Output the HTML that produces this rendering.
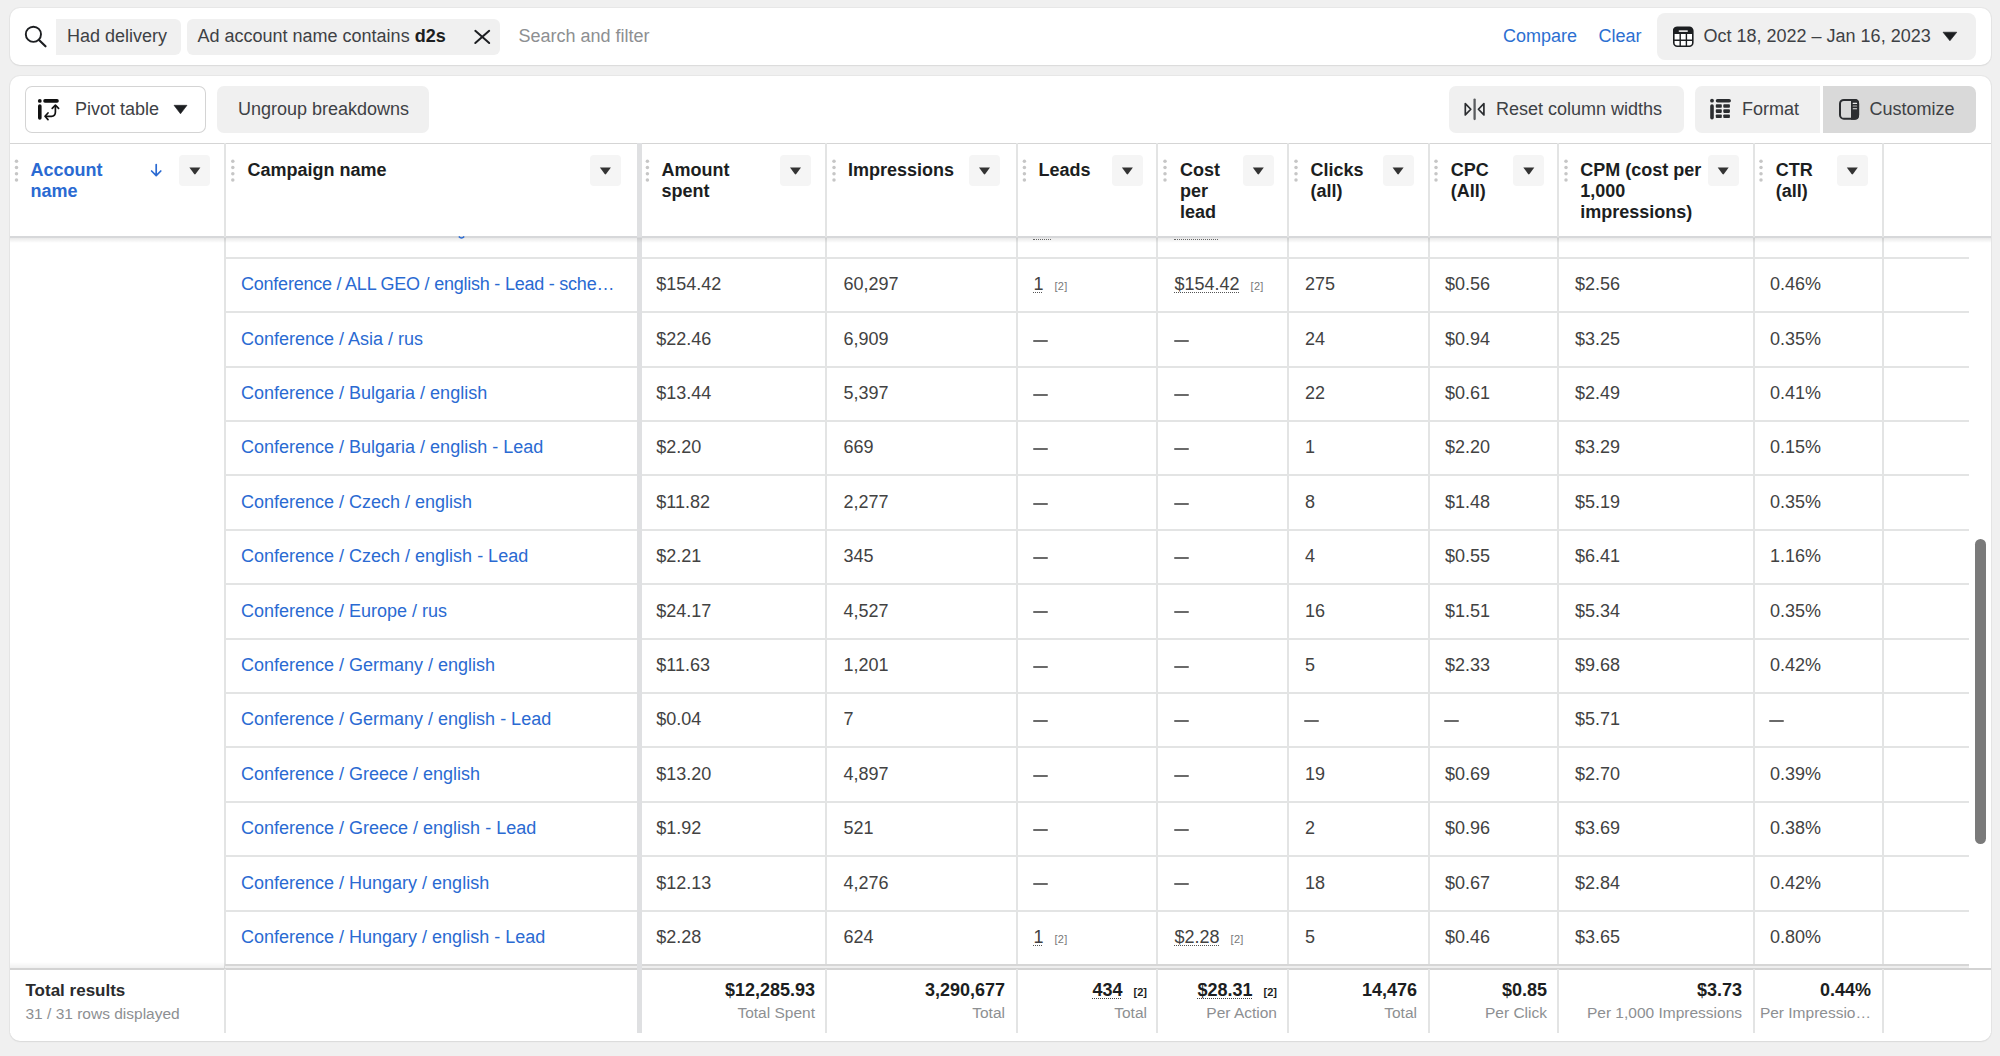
<!DOCTYPE html>
<html><head><meta charset="utf-8"><style>
html,body{margin:0;padding:0;}
body{width:2000px;height:1056px;overflow:hidden;background:#f0f0f0;position:relative;font-family:"Liberation Sans", sans-serif;}
.t{position:absolute;white-space:nowrap;}
.r{position:absolute;}
svg{position:absolute;overflow:visible;}
</style></head><body>

<div class="r" style="left:10px;top:8px;width:1981px;height:57px;background:#fff;border-radius:10px;box-shadow:0 0 0 1px rgba(0,0,0,0.035),0 1px 2px rgba(0,0,0,0.06);"></div>
<svg style="left:0;top:0" width="60" height="60"><circle cx="33.4" cy="34.3" r="7.6" fill="none" stroke="#1c1e21" stroke-width="1.9"/><line x1="39" y1="40" x2="45.5" y2="46.3" stroke="#1c1e21" stroke-width="2.2" stroke-linecap="round"/></svg>
<div class="r" style="left:56px;top:19px;width:125px;height:36px;background:#f0f0f0;border-radius:0 6px 6px 0;"></div>
<div class="t" style="left:67.00px;top:25.76px;font-size:18px;line-height:21px;font-weight:400;color:#3e4145;">Had delivery</div>
<div class="r" style="left:187px;top:19px;width:313px;height:36px;background:#f0f0f0;border-radius:6px;"></div>
<div class="t" style="left:197.50px;top:25.76px;font-size:18px;line-height:21px;font-weight:400;color:#3e4145;">Ad account name contains <b style="color:#1c1e21">d2s</b></div>
<svg style="left:0;top:0" width="500" height="60"><path d="M475.3 30.8 L489.2 43 M489.2 30.8 L475.3 43" stroke="#1c1e21" stroke-width="2" stroke-linecap="round"/></svg>
<div class="t" style="left:518.50px;top:25.76px;font-size:18px;line-height:21px;font-weight:400;color:#8d8f92;">Search and filter</div>
<div class="t" style="left:1503.00px;top:25.76px;font-size:18px;line-height:21px;font-weight:400;color:#2c6fd1;">Compare</div>
<div class="t" style="left:1598.50px;top:25.76px;font-size:18px;line-height:21px;font-weight:400;color:#2c6fd1;">Clear</div>
<div class="r" style="left:1657px;top:13px;width:319px;height:47px;background:#f0f0f0;border-radius:8px;"></div>
<svg style="left:0;top:0" width="1700" height="60">
<rect x="1673.8" y="27.3" width="19" height="19" rx="3.5" fill="#fff" stroke="#1c1e21" stroke-width="1.6"/>
<path d="M1673 30.5 a3.5 3.5 0 0 1 3.5 -3.5 h12.5 a3.5 3.5 0 0 1 3.5 3.5 v3.6 h-19.5z" fill="#1c1e21"/>
<rect x="1678.6" y="30.2" width="9.4" height="1.8" rx="0.9" fill="#e0e0e0"/>
<path d="M1680.2 34 v12.6 M1686.4 34 v12.6 M1673.5 40.2 h19.5" stroke="#1c1e21" stroke-width="1.4"/>
</svg>
<div class="t" style="left:1703.50px;top:25.76px;font-size:18px;line-height:21px;font-weight:400;color:#3e4145;">Oct 18, 2022 – Jan 16, 2023</div>
<svg style="left:0;top:0" width="1970" height="60"><path d="M1943 32.2 L1956.8 32.2 L1949.9 40.8 Z" fill="#1c1e21" stroke="#1c1e21" stroke-width="0.6" stroke-linejoin="round"/></svg>
<div class="r" style="left:10px;top:76px;width:1981px;height:965px;background:#fff;border-radius:10px;box-shadow:0 0 0 1px rgba(0,0,0,0.035),0 1px 2px rgba(0,0,0,0.06);"></div>
<div class="r" style="left:25px;top:86px;width:181px;height:47px;background:#fff;border-radius:7px;box-shadow:inset 0 0 0 1px #d4d4d4;"></div>
<svg style="left:0;top:0" width="210" height="140">
<circle cx="39.8" cy="100.9" r="1.9" fill="#111"/>
<line x1="45" y1="100.9" x2="57" y2="100.9" stroke="#111" stroke-width="3.6" stroke-linecap="round"/>
<line x1="39.8" y1="106" x2="39.8" y2="118" stroke="#111" stroke-width="3.6" stroke-linecap="round"/>
<path d="M46 116.3 H51.5 Q55.4 116.3 55.4 112 V106" fill="none" stroke="#111" stroke-width="1.7"/>
<path d="M48 113 L45 116.3 L48 119.6" fill="none" stroke="#111" stroke-width="1.7" stroke-linecap="round" stroke-linejoin="round"/>
<path d="M52.2 108.4 L55.4 105.2 L58.6 108.4" fill="none" stroke="#111" stroke-width="1.7" stroke-linecap="round" stroke-linejoin="round"/>
<path d="M174 105.3 L187 105.3 L180.5 113.8 Z" fill="#1c1e21" stroke="#1c1e21" stroke-width="0.6" stroke-linejoin="round"/>
</svg>
<div class="t" style="left:75.00px;top:99.26px;font-size:18px;line-height:21px;font-weight:400;color:#3e4145;">Pivot table</div>
<div class="r" style="left:217px;top:86px;width:212px;height:47px;background:#f0f0f0;border-radius:7px;"></div>
<div class="t" style="left:238.00px;top:99.26px;font-size:18px;line-height:21px;font-weight:400;color:#3e4145;">Ungroup breakdowns</div>
<div class="r" style="left:1449px;top:86px;width:235px;height:47px;background:#f0f0f0;border-radius:7px;"></div>
<svg style="left:0;top:0" width="1700" height="140">
<path d="M1465.3 103.6 V114.9 L1470.8 109.25 Z" fill="none" stroke="#2b2d30" stroke-width="1.7" stroke-linejoin="round"/>
<path d="M1483.9 103.6 V114.9 L1478.4 109.25 Z" fill="none" stroke="#2b2d30" stroke-width="1.7" stroke-linejoin="round"/>
<line x1="1474.6" y1="99.6" x2="1474.6" y2="119" stroke="#5a5c5f" stroke-width="2.3" stroke-linecap="round"/>
</svg>
<div class="t" style="left:1496.00px;top:99.26px;font-size:18px;line-height:21px;font-weight:400;color:#3e4145;">Reset column widths</div>
<div class="r" style="left:1695px;top:86px;width:125px;height:47px;background:#f0f0f0;border-radius:7px 0 0 7px;"></div>
<svg style="left:0;top:0" width="1740" height="140">
<circle cx="1712" cy="100.7" r="1.9" fill="#2b2d30"/>
<line x1="1717.5" y1="100.7" x2="1729.2" y2="100.7" stroke="#2b2d30" stroke-width="3.5" stroke-linecap="round"/>
<line x1="1712" y1="106" x2="1712" y2="117.8" stroke="#2b2d30" stroke-width="3.6" stroke-linecap="round"/>
<rect x="1715.8" y="104.2" width="6" height="3.6" rx="0.8" fill="#2b2d30"/>
<rect x="1723.3" y="104.2" width="6.6" height="3.6" rx="0.8" fill="#2b2d30"/>
<rect x="1715.8" y="109.3" width="6" height="3.6" rx="0.8" fill="#2b2d30"/>
<rect x="1723.3" y="109.3" width="6.6" height="3.6" rx="0.8" fill="#2b2d30"/>
<rect x="1715.8" y="114.5" width="6" height="3.6" rx="0.8" fill="#2b2d30"/>
<rect x="1723.3" y="114.5" width="6.6" height="3.6" rx="0.8" fill="#2b2d30"/>
</svg>
<div class="t" style="left:1742.00px;top:99.26px;font-size:18px;line-height:21px;font-weight:400;color:#3e4145;">Format</div>
<div class="r" style="left:1823px;top:86px;width:153px;height:47px;background:#d9d9d9;border-radius:0 7px 7px 0;"></div>
<svg style="left:0;top:0" width="1870" height="140">
<rect x="1840" y="99.9" width="18.2" height="18.8" rx="3.8" fill="none" stroke="#2b2d30" stroke-width="2"/>
<path d="M1851 99 H1855 a4 4 0 0 1 4 4 V115.7 a4 4 0 0 1 -4 4 H1851 Z" fill="#2b2d30"/>
<line x1="1853.2" y1="103.4" x2="1856.6" y2="103.4" stroke="#e8e8e8" stroke-width="1.1" stroke-linecap="round"/>
<line x1="1853.2" y1="106" x2="1856.6" y2="106" stroke="#bdbdbd" stroke-width="1.1" stroke-linecap="round"/>
<line x1="1853.2" y1="108.7" x2="1856.6" y2="108.7" stroke="#e8e8e8" stroke-width="1.1" stroke-linecap="round"/>
</svg>
<div class="t" style="left:1869.50px;top:99.26px;font-size:18px;line-height:21px;font-weight:400;color:#3e4145;">Customize</div>
<div class="r" style="left:225px;top:257px;width:1744px;height:2px;background:#e3e4e4;"></div>
<div class="r" style="left:225px;top:311px;width:1744px;height:2px;background:#e3e4e4;"></div>
<div class="r" style="left:225px;top:366px;width:1744px;height:2px;background:#e3e4e4;"></div>
<div class="r" style="left:225px;top:420px;width:1744px;height:2px;background:#e3e4e4;"></div>
<div class="r" style="left:225px;top:474px;width:1744px;height:2px;background:#e3e4e4;"></div>
<div class="r" style="left:225px;top:529px;width:1744px;height:2px;background:#e3e4e4;"></div>
<div class="r" style="left:225px;top:583px;width:1744px;height:2px;background:#e3e4e4;"></div>
<div class="r" style="left:225px;top:638px;width:1744px;height:2px;background:#e3e4e4;"></div>
<div class="r" style="left:225px;top:692px;width:1744px;height:2px;background:#e3e4e4;"></div>
<div class="r" style="left:225px;top:746px;width:1744px;height:2px;background:#e3e4e4;"></div>
<div class="r" style="left:225px;top:801px;width:1744px;height:2px;background:#e3e4e4;"></div>
<div class="r" style="left:225px;top:855px;width:1744px;height:2px;background:#e3e4e4;"></div>
<div class="r" style="left:225px;top:910px;width:1744px;height:2px;background:#e3e4e4;"></div>
<div class="r" style="left:224px;top:143px;width:2px;height:890px;background:#e3e4e4;"></div>
<div class="r" style="left:825px;top:143px;width:2px;height:890px;background:#e3e4e4;"></div>
<div class="r" style="left:1016px;top:143px;width:2px;height:890px;background:#e3e4e4;"></div>
<div class="r" style="left:1156px;top:143px;width:2px;height:890px;background:#e3e4e4;"></div>
<div class="r" style="left:1287px;top:143px;width:2px;height:890px;background:#e3e4e4;"></div>
<div class="r" style="left:1428px;top:143px;width:2px;height:890px;background:#e3e4e4;"></div>
<div class="r" style="left:1557px;top:143px;width:2px;height:890px;background:#e3e4e4;"></div>
<div class="r" style="left:1753px;top:143px;width:2px;height:890px;background:#e3e4e4;"></div>
<div class="r" style="left:1882px;top:143px;width:2px;height:890px;background:#e3e4e4;"></div>
<div class="r" style="left:637px;top:143px;width:5px;height:890px;background:#dfe0e2;"></div>
<div class="t" style="left:241.00px;top:274.26px;font-size:18px;line-height:21px;font-weight:400;color:#2a6ad2;letter-spacing:-0.23px;">Conference / ALL GEO / english - Lead - sche…</div>
<div class="t" style="left:656.30px;top:274.26px;font-size:18px;line-height:21px;font-weight:400;color:#424242;">$154.42</div>
<div class="t" style="left:843.40px;top:274.26px;font-size:18px;line-height:21px;font-weight:400;color:#424242;">60,297</div>
<div class="t" style="left:1033.50px;top:274.26px;font-size:18px;line-height:21px;font-weight:400;color:#424242;"><span style="text-decoration:underline dotted #555;text-decoration-thickness:1.4px;text-underline-offset:1.5px">1</span><span style="font-size:11px;color:#777;margin-left:11px;letter-spacing:0.3px">[2]</span></div>
<div class="t" style="left:1174.50px;top:274.26px;font-size:18px;line-height:21px;font-weight:400;color:#424242;"><span style="text-decoration:underline dotted #555;text-decoration-thickness:1.4px;text-underline-offset:1.5px">$154.42</span><span style="font-size:11px;color:#777;margin-left:11px;letter-spacing:0.3px">[2]</span></div>
<div class="t" style="left:1305.00px;top:274.26px;font-size:18px;line-height:21px;font-weight:400;color:#424242;">275</div>
<div class="t" style="left:1445.00px;top:274.26px;font-size:18px;line-height:21px;font-weight:400;color:#424242;">$0.56</div>
<div class="t" style="left:1575.00px;top:274.26px;font-size:18px;line-height:21px;font-weight:400;color:#424242;">$2.56</div>
<div class="t" style="left:1770.00px;top:274.26px;font-size:18px;line-height:21px;font-weight:400;color:#424242;">0.46%</div>
<div class="t" style="left:241.00px;top:328.66px;font-size:18px;line-height:21px;font-weight:400;color:#2a6ad2;">Conference / Asia / rus</div>
<div class="t" style="left:656.30px;top:328.66px;font-size:18px;line-height:21px;font-weight:400;color:#424242;">$22.46</div>
<div class="t" style="left:843.40px;top:328.66px;font-size:18px;line-height:21px;font-weight:400;color:#424242;">6,909</div>
<div class="r" style="left:1033px;top:340px;width:15px;height:2px;background:#6a6a6a;border-radius:1px;"></div>
<div class="r" style="left:1174px;top:340px;width:15px;height:2px;background:#6a6a6a;border-radius:1px;"></div>
<div class="t" style="left:1305.00px;top:328.66px;font-size:18px;line-height:21px;font-weight:400;color:#424242;">24</div>
<div class="t" style="left:1445.00px;top:328.66px;font-size:18px;line-height:21px;font-weight:400;color:#424242;">$0.94</div>
<div class="t" style="left:1575.00px;top:328.66px;font-size:18px;line-height:21px;font-weight:400;color:#424242;">$3.25</div>
<div class="t" style="left:1770.00px;top:328.66px;font-size:18px;line-height:21px;font-weight:400;color:#424242;">0.35%</div>
<div class="t" style="left:241.00px;top:383.06px;font-size:18px;line-height:21px;font-weight:400;color:#2a6ad2;">Conference / Bulgaria / english</div>
<div class="t" style="left:656.30px;top:383.06px;font-size:18px;line-height:21px;font-weight:400;color:#424242;">$13.44</div>
<div class="t" style="left:843.40px;top:383.06px;font-size:18px;line-height:21px;font-weight:400;color:#424242;">5,397</div>
<div class="r" style="left:1033px;top:394px;width:15px;height:2px;background:#6a6a6a;border-radius:1px;"></div>
<div class="r" style="left:1174px;top:394px;width:15px;height:2px;background:#6a6a6a;border-radius:1px;"></div>
<div class="t" style="left:1305.00px;top:383.06px;font-size:18px;line-height:21px;font-weight:400;color:#424242;">22</div>
<div class="t" style="left:1445.00px;top:383.06px;font-size:18px;line-height:21px;font-weight:400;color:#424242;">$0.61</div>
<div class="t" style="left:1575.00px;top:383.06px;font-size:18px;line-height:21px;font-weight:400;color:#424242;">$2.49</div>
<div class="t" style="left:1770.00px;top:383.06px;font-size:18px;line-height:21px;font-weight:400;color:#424242;">0.41%</div>
<div class="t" style="left:241.00px;top:437.46px;font-size:18px;line-height:21px;font-weight:400;color:#2a6ad2;">Conference / Bulgaria / english - Lead</div>
<div class="t" style="left:656.30px;top:437.46px;font-size:18px;line-height:21px;font-weight:400;color:#424242;">$2.20</div>
<div class="t" style="left:843.40px;top:437.46px;font-size:18px;line-height:21px;font-weight:400;color:#424242;">669</div>
<div class="r" style="left:1033px;top:448px;width:15px;height:2px;background:#6a6a6a;border-radius:1px;"></div>
<div class="r" style="left:1174px;top:448px;width:15px;height:2px;background:#6a6a6a;border-radius:1px;"></div>
<div class="t" style="left:1305.00px;top:437.46px;font-size:18px;line-height:21px;font-weight:400;color:#424242;">1</div>
<div class="t" style="left:1445.00px;top:437.46px;font-size:18px;line-height:21px;font-weight:400;color:#424242;">$2.20</div>
<div class="t" style="left:1575.00px;top:437.46px;font-size:18px;line-height:21px;font-weight:400;color:#424242;">$3.29</div>
<div class="t" style="left:1770.00px;top:437.46px;font-size:18px;line-height:21px;font-weight:400;color:#424242;">0.15%</div>
<div class="t" style="left:241.00px;top:491.86px;font-size:18px;line-height:21px;font-weight:400;color:#2a6ad2;">Conference / Czech / english</div>
<div class="t" style="left:656.30px;top:491.86px;font-size:18px;line-height:21px;font-weight:400;color:#424242;">$11.82</div>
<div class="t" style="left:843.40px;top:491.86px;font-size:18px;line-height:21px;font-weight:400;color:#424242;">2,277</div>
<div class="r" style="left:1033px;top:503px;width:15px;height:2px;background:#6a6a6a;border-radius:1px;"></div>
<div class="r" style="left:1174px;top:503px;width:15px;height:2px;background:#6a6a6a;border-radius:1px;"></div>
<div class="t" style="left:1305.00px;top:491.86px;font-size:18px;line-height:21px;font-weight:400;color:#424242;">8</div>
<div class="t" style="left:1445.00px;top:491.86px;font-size:18px;line-height:21px;font-weight:400;color:#424242;">$1.48</div>
<div class="t" style="left:1575.00px;top:491.86px;font-size:18px;line-height:21px;font-weight:400;color:#424242;">$5.19</div>
<div class="t" style="left:1770.00px;top:491.86px;font-size:18px;line-height:21px;font-weight:400;color:#424242;">0.35%</div>
<div class="t" style="left:241.00px;top:546.26px;font-size:18px;line-height:21px;font-weight:400;color:#2a6ad2;">Conference / Czech / english - Lead</div>
<div class="t" style="left:656.30px;top:546.26px;font-size:18px;line-height:21px;font-weight:400;color:#424242;">$2.21</div>
<div class="t" style="left:843.40px;top:546.26px;font-size:18px;line-height:21px;font-weight:400;color:#424242;">345</div>
<div class="r" style="left:1033px;top:557px;width:15px;height:2px;background:#6a6a6a;border-radius:1px;"></div>
<div class="r" style="left:1174px;top:557px;width:15px;height:2px;background:#6a6a6a;border-radius:1px;"></div>
<div class="t" style="left:1305.00px;top:546.26px;font-size:18px;line-height:21px;font-weight:400;color:#424242;">4</div>
<div class="t" style="left:1445.00px;top:546.26px;font-size:18px;line-height:21px;font-weight:400;color:#424242;">$0.55</div>
<div class="t" style="left:1575.00px;top:546.26px;font-size:18px;line-height:21px;font-weight:400;color:#424242;">$6.41</div>
<div class="t" style="left:1770.00px;top:546.26px;font-size:18px;line-height:21px;font-weight:400;color:#424242;">1.16%</div>
<div class="t" style="left:241.00px;top:600.66px;font-size:18px;line-height:21px;font-weight:400;color:#2a6ad2;">Conference / Europe / rus</div>
<div class="t" style="left:656.30px;top:600.66px;font-size:18px;line-height:21px;font-weight:400;color:#424242;">$24.17</div>
<div class="t" style="left:843.40px;top:600.66px;font-size:18px;line-height:21px;font-weight:400;color:#424242;">4,527</div>
<div class="r" style="left:1033px;top:611px;width:15px;height:2px;background:#6a6a6a;border-radius:1px;"></div>
<div class="r" style="left:1174px;top:611px;width:15px;height:2px;background:#6a6a6a;border-radius:1px;"></div>
<div class="t" style="left:1305.00px;top:600.66px;font-size:18px;line-height:21px;font-weight:400;color:#424242;">16</div>
<div class="t" style="left:1445.00px;top:600.66px;font-size:18px;line-height:21px;font-weight:400;color:#424242;">$1.51</div>
<div class="t" style="left:1575.00px;top:600.66px;font-size:18px;line-height:21px;font-weight:400;color:#424242;">$5.34</div>
<div class="t" style="left:1770.00px;top:600.66px;font-size:18px;line-height:21px;font-weight:400;color:#424242;">0.35%</div>
<div class="t" style="left:241.00px;top:655.06px;font-size:18px;line-height:21px;font-weight:400;color:#2a6ad2;">Conference / Germany / english</div>
<div class="t" style="left:656.30px;top:655.06px;font-size:18px;line-height:21px;font-weight:400;color:#424242;">$11.63</div>
<div class="t" style="left:843.40px;top:655.06px;font-size:18px;line-height:21px;font-weight:400;color:#424242;">1,201</div>
<div class="r" style="left:1033px;top:666px;width:15px;height:2px;background:#6a6a6a;border-radius:1px;"></div>
<div class="r" style="left:1174px;top:666px;width:15px;height:2px;background:#6a6a6a;border-radius:1px;"></div>
<div class="t" style="left:1305.00px;top:655.06px;font-size:18px;line-height:21px;font-weight:400;color:#424242;">5</div>
<div class="t" style="left:1445.00px;top:655.06px;font-size:18px;line-height:21px;font-weight:400;color:#424242;">$2.33</div>
<div class="t" style="left:1575.00px;top:655.06px;font-size:18px;line-height:21px;font-weight:400;color:#424242;">$9.68</div>
<div class="t" style="left:1770.00px;top:655.06px;font-size:18px;line-height:21px;font-weight:400;color:#424242;">0.42%</div>
<div class="t" style="left:241.00px;top:709.46px;font-size:18px;line-height:21px;font-weight:400;color:#2a6ad2;">Conference / Germany / english - Lead</div>
<div class="t" style="left:656.30px;top:709.46px;font-size:18px;line-height:21px;font-weight:400;color:#424242;">$0.04</div>
<div class="t" style="left:843.40px;top:709.46px;font-size:18px;line-height:21px;font-weight:400;color:#424242;">7</div>
<div class="r" style="left:1033px;top:720px;width:15px;height:2px;background:#6a6a6a;border-radius:1px;"></div>
<div class="r" style="left:1174px;top:720px;width:15px;height:2px;background:#6a6a6a;border-radius:1px;"></div>
<div class="r" style="left:1304px;top:720px;width:15px;height:2px;background:#6a6a6a;border-radius:1px;"></div>
<div class="r" style="left:1444px;top:720px;width:15px;height:2px;background:#6a6a6a;border-radius:1px;"></div>
<div class="t" style="left:1575.00px;top:709.46px;font-size:18px;line-height:21px;font-weight:400;color:#424242;">$5.71</div>
<div class="r" style="left:1769px;top:720px;width:15px;height:2px;background:#6a6a6a;border-radius:1px;"></div>
<div class="t" style="left:241.00px;top:763.86px;font-size:18px;line-height:21px;font-weight:400;color:#2a6ad2;">Conference / Greece / english</div>
<div class="t" style="left:656.30px;top:763.86px;font-size:18px;line-height:21px;font-weight:400;color:#424242;">$13.20</div>
<div class="t" style="left:843.40px;top:763.86px;font-size:18px;line-height:21px;font-weight:400;color:#424242;">4,897</div>
<div class="r" style="left:1033px;top:775px;width:15px;height:2px;background:#6a6a6a;border-radius:1px;"></div>
<div class="r" style="left:1174px;top:775px;width:15px;height:2px;background:#6a6a6a;border-radius:1px;"></div>
<div class="t" style="left:1305.00px;top:763.86px;font-size:18px;line-height:21px;font-weight:400;color:#424242;">19</div>
<div class="t" style="left:1445.00px;top:763.86px;font-size:18px;line-height:21px;font-weight:400;color:#424242;">$0.69</div>
<div class="t" style="left:1575.00px;top:763.86px;font-size:18px;line-height:21px;font-weight:400;color:#424242;">$2.70</div>
<div class="t" style="left:1770.00px;top:763.86px;font-size:18px;line-height:21px;font-weight:400;color:#424242;">0.39%</div>
<div class="t" style="left:241.00px;top:818.26px;font-size:18px;line-height:21px;font-weight:400;color:#2a6ad2;">Conference / Greece / english - Lead</div>
<div class="t" style="left:656.30px;top:818.26px;font-size:18px;line-height:21px;font-weight:400;color:#424242;">$1.92</div>
<div class="t" style="left:843.40px;top:818.26px;font-size:18px;line-height:21px;font-weight:400;color:#424242;">521</div>
<div class="r" style="left:1033px;top:829px;width:15px;height:2px;background:#6a6a6a;border-radius:1px;"></div>
<div class="r" style="left:1174px;top:829px;width:15px;height:2px;background:#6a6a6a;border-radius:1px;"></div>
<div class="t" style="left:1305.00px;top:818.26px;font-size:18px;line-height:21px;font-weight:400;color:#424242;">2</div>
<div class="t" style="left:1445.00px;top:818.26px;font-size:18px;line-height:21px;font-weight:400;color:#424242;">$0.96</div>
<div class="t" style="left:1575.00px;top:818.26px;font-size:18px;line-height:21px;font-weight:400;color:#424242;">$3.69</div>
<div class="t" style="left:1770.00px;top:818.26px;font-size:18px;line-height:21px;font-weight:400;color:#424242;">0.38%</div>
<div class="t" style="left:241.00px;top:872.66px;font-size:18px;line-height:21px;font-weight:400;color:#2a6ad2;">Conference / Hungary / english</div>
<div class="t" style="left:656.30px;top:872.66px;font-size:18px;line-height:21px;font-weight:400;color:#424242;">$12.13</div>
<div class="t" style="left:843.40px;top:872.66px;font-size:18px;line-height:21px;font-weight:400;color:#424242;">4,276</div>
<div class="r" style="left:1033px;top:883px;width:15px;height:2px;background:#6a6a6a;border-radius:1px;"></div>
<div class="r" style="left:1174px;top:883px;width:15px;height:2px;background:#6a6a6a;border-radius:1px;"></div>
<div class="t" style="left:1305.00px;top:872.66px;font-size:18px;line-height:21px;font-weight:400;color:#424242;">18</div>
<div class="t" style="left:1445.00px;top:872.66px;font-size:18px;line-height:21px;font-weight:400;color:#424242;">$0.67</div>
<div class="t" style="left:1575.00px;top:872.66px;font-size:18px;line-height:21px;font-weight:400;color:#424242;">$2.84</div>
<div class="t" style="left:1770.00px;top:872.66px;font-size:18px;line-height:21px;font-weight:400;color:#424242;">0.42%</div>
<div class="t" style="left:241.00px;top:927.06px;font-size:18px;line-height:21px;font-weight:400;color:#2a6ad2;">Conference / Hungary / english - Lead</div>
<div class="t" style="left:656.30px;top:927.06px;font-size:18px;line-height:21px;font-weight:400;color:#424242;">$2.28</div>
<div class="t" style="left:843.40px;top:927.06px;font-size:18px;line-height:21px;font-weight:400;color:#424242;">624</div>
<div class="t" style="left:1033.50px;top:927.06px;font-size:18px;line-height:21px;font-weight:400;color:#424242;"><span style="text-decoration:underline dotted #555;text-decoration-thickness:1.4px;text-underline-offset:1.5px">1</span><span style="font-size:11px;color:#777;margin-left:11px;letter-spacing:0.3px">[2]</span></div>
<div class="t" style="left:1174.50px;top:927.06px;font-size:18px;line-height:21px;font-weight:400;color:#424242;"><span style="text-decoration:underline dotted #555;text-decoration-thickness:1.4px;text-underline-offset:1.5px">$2.28</span><span style="font-size:11px;color:#777;margin-left:11px;letter-spacing:0.3px">[2]</span></div>
<div class="t" style="left:1305.00px;top:927.06px;font-size:18px;line-height:21px;font-weight:400;color:#424242;">5</div>
<div class="t" style="left:1445.00px;top:927.06px;font-size:18px;line-height:21px;font-weight:400;color:#424242;">$0.46</div>
<div class="t" style="left:1575.00px;top:927.06px;font-size:18px;line-height:21px;font-weight:400;color:#424242;">$3.65</div>
<div class="t" style="left:1770.00px;top:927.06px;font-size:18px;line-height:21px;font-weight:400;color:#424242;">0.80%</div>
<div class="r" style="left:10px;top:143px;width:1981px;height:94px;background:#fff;"></div>
<div class="r" style="left:10px;top:143px;width:1981px;height:1px;background:#d5d5d5;"></div>
<div class="r" style="left:10px;top:238px;width:1981px;height:5px;background:linear-gradient(to bottom,rgba(0,0,0,0.085),rgba(0,0,0,0));"></div>
<div class="r" style="left:10px;top:236px;width:1981px;height:2px;background:#d7d8da;"></div>
<div class="r" style="left:224px;top:143px;width:2px;height:94px;background:#e3e4e4;"></div>
<div class="r" style="left:825px;top:143px;width:2px;height:94px;background:#e3e4e4;"></div>
<div class="r" style="left:1016px;top:143px;width:2px;height:94px;background:#e3e4e4;"></div>
<div class="r" style="left:1156px;top:143px;width:2px;height:94px;background:#e3e4e4;"></div>
<div class="r" style="left:1287px;top:143px;width:2px;height:94px;background:#e3e4e4;"></div>
<div class="r" style="left:1428px;top:143px;width:2px;height:94px;background:#e3e4e4;"></div>
<div class="r" style="left:1557px;top:143px;width:2px;height:94px;background:#e3e4e4;"></div>
<div class="r" style="left:1753px;top:143px;width:2px;height:94px;background:#e3e4e4;"></div>
<div class="r" style="left:1882px;top:143px;width:2px;height:94px;background:#e3e4e4;"></div>
<div class="r" style="left:637px;top:143px;width:5px;height:94px;background:#dfe0e2;"></div>
<div class="t" style="left:30.50px;top:160.36px;font-size:18px;line-height:21px;font-weight:700;color:#2a6ad2;">Account</div>
<div class="t" style="left:30.50px;top:181.06px;font-size:18px;line-height:21px;font-weight:700;color:#2a6ad2;">name</div>
<div class="r" style="left:179.4px;top:154.5px;width:31px;height:31px;background:#f5f5f5;border-radius:4px;"></div>
<div class="t" style="left:247.50px;top:160.36px;font-size:18px;line-height:21px;font-weight:700;color:#1c1e21;">Campaign name</div>
<div class="r" style="left:589.9px;top:154.5px;width:31px;height:31px;background:#f5f5f5;border-radius:4px;"></div>
<div class="t" style="left:661.60px;top:160.36px;font-size:18px;line-height:21px;font-weight:700;color:#1c1e21;">Amount</div>
<div class="t" style="left:661.60px;top:181.06px;font-size:18px;line-height:21px;font-weight:700;color:#1c1e21;">spent</div>
<div class="r" style="left:780.0px;top:154.5px;width:31px;height:31px;background:#f5f5f5;border-radius:4px;"></div>
<div class="t" style="left:848.00px;top:160.36px;font-size:18px;line-height:21px;font-weight:700;color:#1c1e21;">Impressions</div>
<div class="r" style="left:969.0px;top:154.5px;width:31px;height:31px;background:#f5f5f5;border-radius:4px;"></div>
<div class="t" style="left:1038.60px;top:160.36px;font-size:18px;line-height:21px;font-weight:700;color:#1c1e21;">Leads</div>
<div class="r" style="left:1111.9px;top:154.5px;width:31px;height:31px;background:#f5f5f5;border-radius:4px;"></div>
<div class="t" style="left:1180.00px;top:160.36px;font-size:18px;line-height:21px;font-weight:700;color:#1c1e21;">Cost</div>
<div class="t" style="left:1180.00px;top:181.06px;font-size:18px;line-height:21px;font-weight:700;color:#1c1e21;">per</div>
<div class="t" style="left:1180.00px;top:201.76px;font-size:18px;line-height:21px;font-weight:700;color:#1c1e21;">lead</div>
<div class="r" style="left:1242.8px;top:154.5px;width:31px;height:31px;background:#f5f5f5;border-radius:4px;"></div>
<div class="t" style="left:1310.60px;top:160.36px;font-size:18px;line-height:21px;font-weight:700;color:#1c1e21;">Clicks</div>
<div class="t" style="left:1310.60px;top:181.06px;font-size:18px;line-height:21px;font-weight:700;color:#1c1e21;">(all)</div>
<div class="r" style="left:1382.6px;top:154.5px;width:31px;height:31px;background:#f5f5f5;border-radius:4px;"></div>
<div class="t" style="left:1450.70px;top:160.36px;font-size:18px;line-height:21px;font-weight:700;color:#1c1e21;">CPC</div>
<div class="t" style="left:1450.70px;top:181.06px;font-size:18px;line-height:21px;font-weight:700;color:#1c1e21;">(All)</div>
<div class="r" style="left:1513.3px;top:154.5px;width:31px;height:31px;background:#f5f5f5;border-radius:4px;"></div>
<div class="t" style="left:1580.30px;top:160.36px;font-size:18px;line-height:21px;font-weight:700;color:#1c1e21;">CPM (cost per</div>
<div class="t" style="left:1580.30px;top:181.06px;font-size:18px;line-height:21px;font-weight:700;color:#1c1e21;">1,000</div>
<div class="t" style="left:1580.30px;top:201.76px;font-size:18px;line-height:21px;font-weight:700;color:#1c1e21;">impressions)</div>
<div class="r" style="left:1707.7px;top:154.5px;width:31px;height:31px;background:#f5f5f5;border-radius:4px;"></div>
<div class="t" style="left:1775.70px;top:160.36px;font-size:18px;line-height:21px;font-weight:700;color:#1c1e21;">CTR</div>
<div class="t" style="left:1775.70px;top:181.06px;font-size:18px;line-height:21px;font-weight:700;color:#1c1e21;">(all)</div>
<div class="r" style="left:1836.8px;top:154.5px;width:31px;height:31px;background:#f5f5f5;border-radius:4px;"></div>
<svg style="left:0;top:0" width="2000" height="240"><circle cx="16.5" cy="161.2" r="1.75" fill="#c6c6c6"/><circle cx="16.5" cy="167.5" r="1.75" fill="#c6c6c6"/><circle cx="16.5" cy="173.8" r="1.75" fill="#c6c6c6"/><circle cx="16.5" cy="180.1" r="1.75" fill="#c6c6c6"/><path d="M189.4 167.4 L200.4 167.4 L195.6 174 Q194.9 174.8 194.2 174 Z" fill="#333"/><circle cx="232.8" cy="161.2" r="1.75" fill="#c6c6c6"/><circle cx="232.8" cy="167.5" r="1.75" fill="#c6c6c6"/><circle cx="232.8" cy="173.8" r="1.75" fill="#c6c6c6"/><circle cx="232.8" cy="180.1" r="1.75" fill="#c6c6c6"/><path d="M599.9 167.4 L610.9 167.4 L606.1 174 Q605.4 174.8 604.7 174 Z" fill="#333"/><circle cx="647.4" cy="161.2" r="1.75" fill="#c6c6c6"/><circle cx="647.4" cy="167.5" r="1.75" fill="#c6c6c6"/><circle cx="647.4" cy="173.8" r="1.75" fill="#c6c6c6"/><circle cx="647.4" cy="180.1" r="1.75" fill="#c6c6c6"/><path d="M790.0 167.4 L801.0 167.4 L796.2 174 Q795.5 174.8 794.8 174 Z" fill="#333"/><circle cx="834" cy="161.2" r="1.75" fill="#c6c6c6"/><circle cx="834" cy="167.5" r="1.75" fill="#c6c6c6"/><circle cx="834" cy="173.8" r="1.75" fill="#c6c6c6"/><circle cx="834" cy="180.1" r="1.75" fill="#c6c6c6"/><path d="M979.0 167.4 L990.0 167.4 L985.2 174 Q984.5 174.8 983.8 174 Z" fill="#333"/><circle cx="1024.4" cy="161.2" r="1.75" fill="#c6c6c6"/><circle cx="1024.4" cy="167.5" r="1.75" fill="#c6c6c6"/><circle cx="1024.4" cy="173.8" r="1.75" fill="#c6c6c6"/><circle cx="1024.4" cy="180.1" r="1.75" fill="#c6c6c6"/><path d="M1121.9 167.4 L1132.9 167.4 L1128.1 174 Q1127.4 174.8 1126.7 174 Z" fill="#333"/><circle cx="1165" cy="161.2" r="1.75" fill="#c6c6c6"/><circle cx="1165" cy="167.5" r="1.75" fill="#c6c6c6"/><circle cx="1165" cy="173.8" r="1.75" fill="#c6c6c6"/><circle cx="1165" cy="180.1" r="1.75" fill="#c6c6c6"/><path d="M1252.8 167.4 L1263.8 167.4 L1259.0 174 Q1258.3 174.8 1257.6 174 Z" fill="#333"/><circle cx="1296" cy="161.2" r="1.75" fill="#c6c6c6"/><circle cx="1296" cy="167.5" r="1.75" fill="#c6c6c6"/><circle cx="1296" cy="173.8" r="1.75" fill="#c6c6c6"/><circle cx="1296" cy="180.1" r="1.75" fill="#c6c6c6"/><path d="M1392.6 167.4 L1403.6 167.4 L1398.8 174 Q1398.1 174.8 1397.4 174 Z" fill="#333"/><circle cx="1436" cy="161.2" r="1.75" fill="#c6c6c6"/><circle cx="1436" cy="167.5" r="1.75" fill="#c6c6c6"/><circle cx="1436" cy="173.8" r="1.75" fill="#c6c6c6"/><circle cx="1436" cy="180.1" r="1.75" fill="#c6c6c6"/><path d="M1523.3 167.4 L1534.3 167.4 L1529.5 174 Q1528.8 174.8 1528.1 174 Z" fill="#333"/><circle cx="1566" cy="161.2" r="1.75" fill="#c6c6c6"/><circle cx="1566" cy="167.5" r="1.75" fill="#c6c6c6"/><circle cx="1566" cy="173.8" r="1.75" fill="#c6c6c6"/><circle cx="1566" cy="180.1" r="1.75" fill="#c6c6c6"/><path d="M1717.7 167.4 L1728.7 167.4 L1723.9 174 Q1723.2 174.8 1722.5 174 Z" fill="#333"/><circle cx="1761" cy="161.2" r="1.75" fill="#c6c6c6"/><circle cx="1761" cy="167.5" r="1.75" fill="#c6c6c6"/><circle cx="1761" cy="173.8" r="1.75" fill="#c6c6c6"/><circle cx="1761" cy="180.1" r="1.75" fill="#c6c6c6"/><path d="M1846.8 167.4 L1857.8 167.4 L1853.0 174 Q1852.3 174.8 1851.6 174 Z" fill="#333"/><path d="M156.2 164.5 V175.5 M151.6 171 L156.2 175.6 L160.8 171" fill="none" stroke="#2a6ad2" stroke-width="1.7" stroke-linecap="round" stroke-linejoin="round"/></svg>
<svg style="left:0;top:0" width="1300" height="260"><path d="M458.8 236.6 q2.7 3 5.4 0" fill="none" stroke="#2a6ad2" stroke-width="1.5"/></svg>
<div class="r" style="left:1033px;top:238.5px;width:18px;height:0;border-top:1.3px dotted #666;"></div>
<div class="r" style="left:1174px;top:238.5px;width:44px;height:0;border-top:1.3px dotted #666;"></div>
<div class="r" style="left:10px;top:969px;width:1981px;height:64px;background:#fff;"></div>
<div class="r" style="left:10px;top:962px;width:215px;height:6px;background:linear-gradient(to bottom,rgba(0,0,0,0),rgba(0,0,0,0.06));"></div>
<div class="r" style="left:225px;top:964px;width:1744px;height:1.5px;background:#d6d6d6;"></div>
<div class="r" style="left:225px;top:965.5px;width:1744px;height:2.5px;background:#eeeeee;"></div>
<div class="r" style="left:10px;top:968px;width:1981px;height:1.5px;background:#d3d3d3;"></div>
<div class="r" style="left:224px;top:969px;width:2px;height:64px;background:#e3e4e4;"></div>
<div class="r" style="left:825px;top:969px;width:2px;height:64px;background:#e3e4e4;"></div>
<div class="r" style="left:1016px;top:969px;width:2px;height:64px;background:#e3e4e4;"></div>
<div class="r" style="left:1156px;top:969px;width:2px;height:64px;background:#e3e4e4;"></div>
<div class="r" style="left:1287px;top:969px;width:2px;height:64px;background:#e3e4e4;"></div>
<div class="r" style="left:1428px;top:969px;width:2px;height:64px;background:#e3e4e4;"></div>
<div class="r" style="left:1557px;top:969px;width:2px;height:64px;background:#e3e4e4;"></div>
<div class="r" style="left:1753px;top:969px;width:2px;height:64px;background:#e3e4e4;"></div>
<div class="r" style="left:1882px;top:969px;width:2px;height:64px;background:#e3e4e4;"></div>
<div class="r" style="left:637px;top:964px;width:5px;height:69px;background:#dfe0e2;"></div>
<div class="t" style="left:25.50px;top:980.61px;font-size:17px;line-height:20px;font-weight:700;color:#2a2b2d;">Total results</div>
<div class="t" style="left:25.50px;top:1005.33px;font-size:15.5px;line-height:18px;font-weight:400;color:#8d8f92;">31 / 31 rows displayed</div>
<div class="t" style="right:1185.00px;top:979.96px;font-size:18px;line-height:21px;font-weight:700;color:#1c1e21;text-align:right;">$12,285.93</div>
<div class="t" style="right:1185.00px;top:1004.43px;font-size:15.5px;line-height:18px;font-weight:400;color:#8d8f92;text-align:right;">Total Spent</div>
<div class="t" style="right:995.00px;top:979.96px;font-size:18px;line-height:21px;font-weight:700;color:#1c1e21;text-align:right;">3,290,677</div>
<div class="t" style="right:995.00px;top:1004.43px;font-size:15.5px;line-height:18px;font-weight:400;color:#8d8f92;text-align:right;">Total</div>
<div class="t" style="right:853.00px;top:979.96px;font-size:18px;line-height:21px;font-weight:700;color:#1c1e21;text-align:right;"><span style="text-decoration:underline dotted #444;text-decoration-thickness:1.4px;text-underline-offset:1.5px">434</span><span style="font-size:11px;margin-left:11px">[2]</span></div>
<div class="t" style="right:853.00px;top:1004.43px;font-size:15.5px;line-height:18px;font-weight:400;color:#8d8f92;text-align:right;">Total</div>
<div class="t" style="right:723.00px;top:979.96px;font-size:18px;line-height:21px;font-weight:700;color:#1c1e21;text-align:right;"><span style="text-decoration:underline dotted #444;text-decoration-thickness:1.4px;text-underline-offset:1.5px">$28.31</span><span style="font-size:11px;margin-left:11px">[2]</span></div>
<div class="t" style="right:723.00px;top:1004.43px;font-size:15.5px;line-height:18px;font-weight:400;color:#8d8f92;text-align:right;">Per Action</div>
<div class="t" style="right:583.00px;top:979.96px;font-size:18px;line-height:21px;font-weight:700;color:#1c1e21;text-align:right;">14,476</div>
<div class="t" style="right:583.00px;top:1004.43px;font-size:15.5px;line-height:18px;font-weight:400;color:#8d8f92;text-align:right;">Total</div>
<div class="t" style="right:453.00px;top:979.96px;font-size:18px;line-height:21px;font-weight:700;color:#1c1e21;text-align:right;">$0.85</div>
<div class="t" style="right:453.00px;top:1004.43px;font-size:15.5px;line-height:18px;font-weight:400;color:#8d8f92;text-align:right;">Per Click</div>
<div class="t" style="right:258.00px;top:979.96px;font-size:18px;line-height:21px;font-weight:700;color:#1c1e21;text-align:right;">$3.73</div>
<div class="t" style="right:258.00px;top:1004.43px;font-size:15.5px;line-height:18px;font-weight:400;color:#8d8f92;text-align:right;">Per 1,000 Impressions</div>
<div class="t" style="right:129.00px;top:979.96px;font-size:18px;line-height:21px;font-weight:700;color:#1c1e21;text-align:right;">0.44%</div>
<div class="t" style="right:129.00px;top:1004.43px;font-size:15.5px;line-height:18px;font-weight:400;color:#8d8f92;text-align:right;">Per Impressio…</div>
<div class="r" style="left:1975px;top:539px;width:11px;height:305px;background:#7a7a7a;border-radius:6px;"></div>
</body></html>
